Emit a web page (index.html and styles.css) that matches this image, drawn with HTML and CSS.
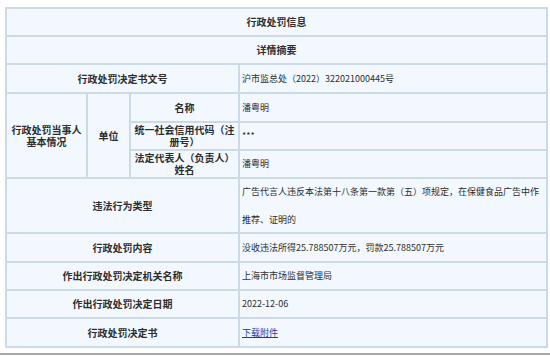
FILE: index.html
```html
<!DOCTYPE html>
<html lang="zh-CN">
<head>
<meta charset="utf-8">
<title>行政处罚信息</title>
<link rel="stylesheet" href="styles.css">
</head>
<body>
<div class="sheet">
  <div class="cell head span4">行政处罚信息</div>
  <div class="cell head span4">详情摘要</div>

  <div class="cell label span3">行政处罚决定书文号</div>
  <div class="cell value">沪市监总处（2022）322021000445号</div>

  <div class="cell label party">行政处罚当事人基本情况</div>
  <div class="cell label unit">单位</div>
  <div class="cell label sub">名称</div>
  <div class="cell value">潘粤明</div>
  <div class="cell label sub">统一社会信用代码（注册号）</div>
  <div class="cell value">***</div>
  <div class="cell label sub">法定代表人（负责人）姓名</div>
  <div class="cell value">潘粤明</div>

  <div class="cell label span3">违法行为类型</div>
  <div class="cell value tall">广告代言人违反本法第十八条第一款第（五）项规定，在保健食品广告中作推荐、证明的</div>

  <div class="cell label span3">行政处罚内容</div>
  <div class="cell value">没收违法所得25.788507万元，罚款25.788507万元</div>

  <div class="cell label span3">作出行政处罚决定机关名称</div>
  <div class="cell value">上海市市场监督管理局</div>

  <div class="cell label span3">作出行政处罚决定日期</div>
  <div class="cell value">2022-12-06</div>

  <div class="cell label span3">行政处罚决定书</div>
  <div class="cell value"><a class="link" href="#">下载附件</a></div>
</div>
<div class="rule"></div>
</body>
</html>
```
FILE: styles.css
```css
html, body {
  margin: 0;
  padding: 0;
  background: #ffffff;
}

body {
  font-family: "Noto Sans CJK SC", "Liberation Sans", sans-serif;
  color: #333333;
  width: 550px;
  height: 356px;
  overflow: hidden;
}

.sheet {
  display: grid;
  grid-template-columns: 79px 41px 107px 306px;
  grid-template-rows: 26px 26px 27px 27px 26px 26px 53px 27px 26px 26px 27px;
  gap: 2px;
  padding: 2px;
  margin: 7px 0 0 5px;
  width: 539px;
  background: #cbdae4;
}

.cell {
  background: #f2f8fe;
  display: flex;
  align-items: center;
}

.span4 {
  grid-column: 1 / 5;
}

.span3 {
  grid-column: 1 / 4;
}

.head,
.label {
  justify-content: center;
  text-align: center;
  font-weight: bold;
  font-size: 10px;
  line-height: 12px;
  color: #2e2e2e;
}

.party {
  grid-column: 1;
  grid-row: 4 / 7;
  padding: 0 2px;
}

.unit {
  grid-column: 2;
  grid-row: 4 / 7;
}

.sub {
  grid-column: 3;
  padding: 0 2px;
}

.value {
  grid-column: 4;
  font-size: 9px;
  line-height: 12px;
  padding-left: 2px;
  color: #2e2e2e;
}

.tall {
  line-height: 28px;
}

.link {
  color: #1a3fa3;
  text-decoration: underline;
}

.rule {
  margin-top: 5px;
  height: 3px;
  border-top: 2px solid #a8a8a8;
  background: #ffffff;
}
```
